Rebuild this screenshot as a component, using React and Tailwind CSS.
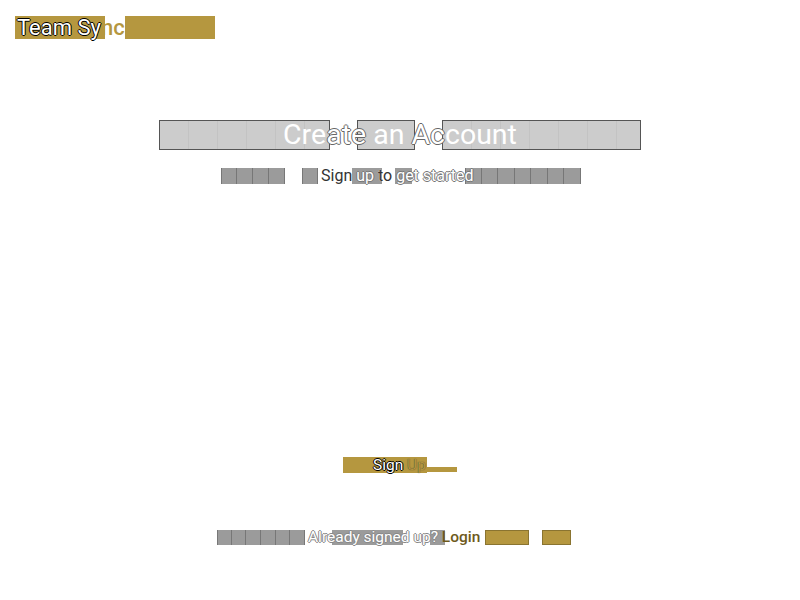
const GOLD = "bg-[#b5973f]";

const Cells = ({ count, w, h, tone = "bg-[#9b9b9b]" }) => (
  <div className={`flex ${h}`}>
    {Array.from({ length: count }).map((_, i) => (
      <div key={i} className={`${w} h-full border-r border-[#777] ${tone} first:border-l`} />
    ))}
  </div>
);

const Header = () => (
  <header className="pl-[15px] pt-4">
    <div className="grid h-[22px]">
      <div className="flex [grid-area:1/1]">
        <div className={`w-[90px] ${GOLD}`} />
        <div className="w-[20px] bg-white" />
        <div className={`w-[90px] ${GOLD}`} />
      </div>
      <div className="[grid-area:1/1] pl-[2px] text-[22px] leading-[23px]">
        <span className="text-white [text-shadow:-1px_0_#000,1px_0_#000,0_-1px_#000,0_1px_#000]">Team Sy</span>
        <span className="font-medium text-[#b5973f]">nc</span>
      </div>
    </div>
  </header>
);

const outlineGrey = "[text-shadow:-1px_0_#666,1px_0_#666,0_-1px_#666,0_1px_#666]";

const Title = () => (
  <div className="grid h-[30px] w-[482px]">
    <div className="flex [grid-area:1/1]">
      <div className="w-[171px] border border-[#555] bg-[repeating-linear-gradient(90deg,#cccccc_0_28px,#c3c3c3_28px_29px)]" />
      <div className="w-[27px] bg-white" />
      <div className="w-[58px] border border-[#555] bg-[#cccccc]" />
      <div className="w-[27px] bg-white" />
      <div className="w-[199px] border border-[#555] bg-[repeating-linear-gradient(90deg,#cccccc_0_28px,#c3c3c3_28px_29px)]" />
    </div>
    <h1 className="[grid-area:1/1] text-center text-[28.5px] leading-[30px] text-white">
      Cre
      <span className={outlineGrey}>ate</span>
      {" an "}
      <span className={outlineGrey}>Ac</span>
      count
    </h1>
  </div>
);

const Subtitle = () => (
  <div className="mt-[18px] grid h-4 w-[358px]">
    <div className="flex [grid-area:1/1]">
      <Cells count={4} w="w-[16px]" h="h-4" />
      <div className="w-[17px]" />
      <Cells count={1} w="w-[16px]" h="h-4" />
      <div className="w-[34px]" />
      <div className="w-[30px] bg-[#9b9b9b]" />
      <div className="w-[13px]" />
      <div className="w-[17px] bg-[#9b9b9b]" />
      <div className="w-[53px]" />
      <Cells count={7} w="w-[16.5px]" h="h-4" />
    </div>
    <p className="[grid-area:1/1] pl-[100px] text-[16px] leading-4 text-white [text-shadow:-1px_0_#777,1px_0_#777,0_-1px_#777,0_1px_#777]">
      <span className="text-[#333] [text-shadow:0_0_1px_#fff]">Sign</span> up{" "}
      <span className="text-[#333] [text-shadow:0_0_1px_#fff]">to</span> get started
    </p>
  </div>
);

const SignUp = () => (
  <button className="mt-[273px] grid h-4 w-[114px]">
    <div className="flex items-stretch [grid-area:1/1]">
      <div className={`w-[84px] ${GOLD}`} />
      <div className="flex w-[30px] flex-col justify-end pb-[1px]">
        <div className={`h-[5px] ${GOLD}`} />
      </div>
    </div>
    <span className="[grid-area:1/1] pl-[30px] text-left text-[15.5px] leading-4">
      <span className="text-white [text-shadow:-1px_0_#000,1px_0_#000,0_-1px_#000,0_1px_#000]">Sign </span>
      <span className="text-[#b5973f] [text-shadow:0_0_1px_#333]">Up</span>
    </span>
  </button>
);

const Footer = () => (
  <div className="mt-[57px] grid h-[15px] w-[366px]">
    <div className="flex [grid-area:1/1]">
      <Cells count={6} w="w-[14.7px]" h="h-[15px]" />
      <div className="w-[27px]" />
      <div className="w-[71px] bg-[#9b9b9b]" />
      <div className="w-[27px]" />
      <div className="w-[15px] bg-[#9b9b9b]" />
      <div className="w-[40px]" />
      <div className={`w-[44px] border border-[#8a7430] ${GOLD}`} />
      <div className="w-[13px]" />
      <div className={`w-[29px] border border-[#8a7430] ${GOLD}`} />
    </div>
    <p className="[grid-area:1/1] pl-[91px] text-[15.5px] leading-[15px] text-white [text-shadow:-1px_0_#888,1px_0_#888,0_-1px_#888,0_1px_#888]">
      Already signed up?{" "}
      <span className="font-medium text-[#6e5a1c] [text-shadow:none]">Login</span>
    </p>
  </div>
);

export default function App() {
  return (
    <div className="min-h-screen bg-white font-['Roboto','Liberation_Sans',sans-serif]">
      <Header />
      <main className="mt-[82px] flex flex-col items-center">
        <Title />
        <Subtitle />
        <SignUp />
        <Footer />
      </main>
    </div>
  );
}
